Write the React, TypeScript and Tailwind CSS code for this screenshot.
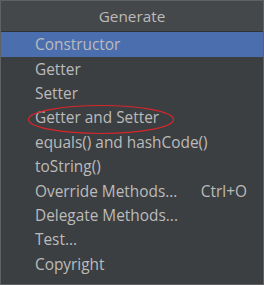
import React from 'react';

const items: { label: string; shortcut?: string }[] = [
  { label: 'Constructor' },
  { label: 'Getter' },
  { label: 'Setter' },
  { label: 'Getter and Setter' },
  { label: 'equals() and hashCode()' },
  { label: 'toString()' },
  { label: 'Override Methods...', shortcut: 'Ctrl+O' },
  { label: 'Delegate Methods...' },
  { label: 'Test...' },
  { label: 'Copyright' },
];

export default function App() {
  return (
    <div
      className="relative w-[264px] h-[285px] bg-[#3c3f41] border border-[#5f6162] text-[#bbbbbb] overflow-hidden"
      style={{ fontFamily: '"Open Sans", "Noto Sans", sans-serif' }}
    >
      {/* Header */}
      <div className="h-[31px] bg-[#45484a] border-b border-[#323232] flex items-center justify-center text-[15.3px]">
        Generate
      </div>

      {/* Items */}
      <div className="flex flex-col">
        {items.map((item, i) => (
          <div
            key={item.label}
            className={`h-[24.4px] flex items-center pl-[34px] pr-4 text-[15.4px] ${
              i === 0 ? 'bg-[#4b6eaf] h-[25px]' : ''
            }`}
          >
            <span className="w-[167px] whitespace-nowrap">{item.label}</span>
            {item.shortcut && <span>{item.shortcut}</span>}
          </div>
        ))}
      </div>

      {/* Red annotation ellipse */}
      <svg className="absolute left-[26px] top-[103px]" width="148" height="31" viewBox="0 0 148 31">
        <ellipse cx="74" cy="15.5" rx="72.5" ry="14" fill="none" stroke="#d9262b" strokeWidth="1.2" />
      </svg>
    </div>
  );
}
